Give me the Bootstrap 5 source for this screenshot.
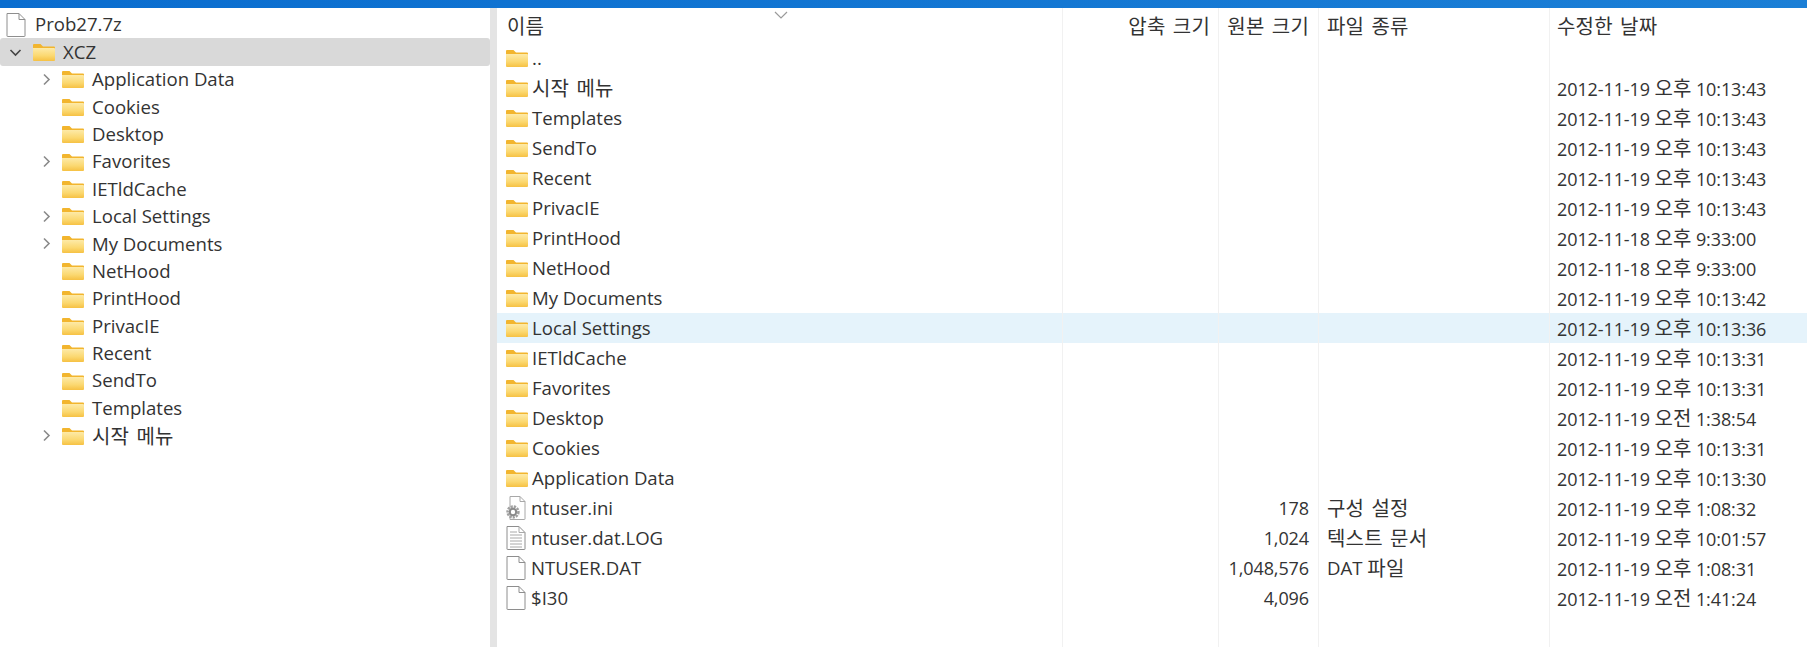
<!DOCTYPE html>
<html lang="ko">
<head>
<meta charset="utf-8">
<title>Prob27.7z</title>
<link href="https://cdn.jsdelivr.net/npm/bootstrap@5.3.0/dist/css/bootstrap.min.css" rel="stylesheet">
<style>
html,body{height:647px;overflow:hidden;background:#fff}
body{font-family:"Open Sans","Noto Sans CJK KR",sans-serif;font-size:18.6px;color:#333;line-height:1}
.ko{font-family:"Noto Sans CJK KR",sans-serif;font-size:20px;word-spacing:1.5px;letter-spacing:.2px}
.datecell{font-size:18px;letter-spacing:-.1px;white-space:pre}
.datecell .ko{letter-spacing:0;word-spacing:0}
.sysdefs{display:block;width:0;height:0}
.titlebar{height:8px;background:linear-gradient(90deg,#0a6dcf,#1b7fd6)}
.panes{height:639px}
.treepane{width:490px;padding-top:3px}
.splitter{width:7px;background:#e4e4e4}
.treerow{height:27.4px;white-space:nowrap}
.treerow.sel{background:#d9d9d9;border-radius:3px}
.lvl0{padding-left:6px}
.lvl1{padding-left:9px}
.lvl2{padding-left:40px}
.arrow{width:13px;height:13px;flex:none;fill:none;stroke:#8a8a8a;stroke-width:1.6}
.sel .arrow{stroke:#444;width:13px}
.blank{width:13px;flex:none}
.ico-folder{width:22px;height:18px;flex:none}
.lvl1 .ico-folder{margin-left:11px;margin-right:8px}
.lvl2 .ico-folder{margin-left:9px;margin-right:8px}
.lvl0 .ico-file{margin-right:9px}
.ico-file{width:20px;height:24px;flex:none}
.listpane{min-width:0}
.lrow{display:flex;height:30px;align-items:center}
.lrow.hl{background:#e5f3fb}
.lrow.head{height:35px;align-items:flex-start;position:relative}
.lrow.filler{flex-grow:1}
.c-name{width:565px;flex:none;padding-left:9px;display:flex;align-items:center;white-space:nowrap}
.head .c-name{height:35px;padding-left:10px}
.c-name .ico-folder{margin-right:4px}
.c-name .ico-file{margin-right:5px}
.c-packed,.c-size,.c-type,.c-date{height:100%;flex:none;border-left:1px solid #f1f1f1;display:flex;align-items:center;white-space:nowrap}
.c-packed{width:156px;justify-content:flex-end;padding-right:8px}
.c-size{width:100px;justify-content:flex-end;padding-right:9px}
.c-type{width:231px;padding-left:8px}
.c-date{padding-left:7px;width:258px}
.c-date.datecell{display:block;line-height:30px}
.sorter{position:absolute;left:277px;top:3px;width:14px;height:8px;fill:none;stroke:#9a9a9a;stroke-width:1.2}
</style>
</head>
<body>
<svg class="sysdefs" aria-hidden="true">
<defs>
<linearGradient id="fg" x1="0" y1="0" x2="0" y2="1"><stop offset="0" stop-color="#fdeaa8"/><stop offset=".6" stop-color="#fbd870"/><stop offset="1" stop-color="#f6c143"/></linearGradient>
<symbol id="folder" viewBox="0 0 22 18"><path d="M1 1h6.5l2.5 2.5h11a1 1 0 0 1 1 1V6H0V2a1 1 0 0 1 1-1z" fill="#f2b52e"/><path d="M0 5h21a1 1 0 0 1 1 1v11a1 1 0 0 1-1 1H1a1 1 0 0 1-1-1z" fill="url(#fg)"/></symbol>
<symbol id="page" viewBox="0 0 20 24"><path d="M1 .5h12l6 6V23a.5.5 0 0 1-.5.5h-17A.5.5 0 0 1 1 23z" fill="#fff" stroke="#8e8e8e"/><path d="M13 .5v6h6" fill="none" stroke="#8e8e8e"/></symbol>
<symbol id="txt" viewBox="0 0 20 24"><path d="M1 .5h12l6 6V23a.5.5 0 0 1-.5.5h-17A.5.5 0 0 1 1 23z" fill="#fff" stroke="#8e8e8e"/><path d="M13 .5v6h6M4 6h7M4 9h12M4 12h12M4 15h12M4 18h12M4 21h12" fill="none" stroke="#a8a8a8"/></symbol>
<symbol id="ini" viewBox="0 0 20 24"><path d="M4 .5h10l5 5V23a.5.5 0 0 1-.5.5H4z" fill="#fff" stroke="#a8a8a8"/><path d="M14 .5v5h5" fill="none" stroke="#a8a8a8"/><circle cx="7" cy="16" r="5.4" fill="none" stroke="#a0a0a0" stroke-width="2.6" stroke-dasharray="2.2 1"/><circle cx="7" cy="16" r="3.2" fill="none" stroke="#8a8a8a" stroke-width="2"/></symbol>
<symbol id="chev" viewBox="0 0 13 13"><path d="M4 1.5l5 5-5 5"/></symbol>
<symbol id="chevd" viewBox="0 0 13 13"><path d="M1.5 4l5 5 5-5"/></symbol>
</defs>
</svg>
<div class="titlebar"></div>
<div class="panes d-flex">
  <div class="treepane flex-none">
    <div class="treerow lvl0 d-flex align-items-center"><svg class="ico-file"><use href="#page"/></svg>Prob27.7z</div>
    <div class="treerow sel lvl1 d-flex align-items-center"><svg class="arrow"><use href="#chevd"/></svg><svg class="ico-folder"><use href="#folder"/></svg>XCZ</div>
    <div class="treerow lvl2 d-flex align-items-center"><svg class="arrow"><use href="#chev"/></svg><svg class="ico-folder"><use href="#folder"/></svg>Application Data</div>
    <div class="treerow lvl2 d-flex align-items-center"><span class="blank"></span><svg class="ico-folder"><use href="#folder"/></svg>Cookies</div>
    <div class="treerow lvl2 d-flex align-items-center"><span class="blank"></span><svg class="ico-folder"><use href="#folder"/></svg>Desktop</div>
    <div class="treerow lvl2 d-flex align-items-center"><svg class="arrow"><use href="#chev"/></svg><svg class="ico-folder"><use href="#folder"/></svg>Favorites</div>
    <div class="treerow lvl2 d-flex align-items-center"><span class="blank"></span><svg class="ico-folder"><use href="#folder"/></svg>IETldCache</div>
    <div class="treerow lvl2 d-flex align-items-center"><svg class="arrow"><use href="#chev"/></svg><svg class="ico-folder"><use href="#folder"/></svg>Local Settings</div>
    <div class="treerow lvl2 d-flex align-items-center"><svg class="arrow"><use href="#chev"/></svg><svg class="ico-folder"><use href="#folder"/></svg>My Documents</div>
    <div class="treerow lvl2 d-flex align-items-center"><span class="blank"></span><svg class="ico-folder"><use href="#folder"/></svg>NetHood</div>
    <div class="treerow lvl2 d-flex align-items-center"><span class="blank"></span><svg class="ico-folder"><use href="#folder"/></svg>PrintHood</div>
    <div class="treerow lvl2 d-flex align-items-center"><span class="blank"></span><svg class="ico-folder"><use href="#folder"/></svg>PrivacIE</div>
    <div class="treerow lvl2 d-flex align-items-center"><span class="blank"></span><svg class="ico-folder"><use href="#folder"/></svg>Recent</div>
    <div class="treerow lvl2 d-flex align-items-center"><span class="blank"></span><svg class="ico-folder"><use href="#folder"/></svg>SendTo</div>
    <div class="treerow lvl2 d-flex align-items-center"><span class="blank"></span><svg class="ico-folder"><use href="#folder"/></svg>Templates</div>
    <div class="treerow lvl2 d-flex align-items-center"><svg class="arrow"><use href="#chev"/></svg><svg class="ico-folder"><use href="#folder"/></svg><span class="ko">시작 메뉴</span></div>
  </div>
  <div class="splitter"></div>
  <div class="listpane flex-grow-1 d-flex flex-column">
    <div class="lrow head"><div class="c-name"><span class="ko">이름</span></div><svg class="sorter" viewBox="0 0 14 8"><path d="M1 1l6 6 6-6"/></svg><div class="c-packed"><span class="ko">압축 크기</span></div><div class="c-size"><span class="ko">원본 크기</span></div><div class="c-type"><span class="ko">파일 종류</span></div><div class="c-date"><span class="ko">수정한 날짜</span></div></div>
    <div class="lrow"><div class="c-name"><svg class="ico-folder"><use href="#folder"/></svg>..</div><div class="c-packed"></div><div class="c-size"></div><div class="c-type"></div><div class="c-date"></div></div>
    <div class="lrow"><div class="c-name"><svg class="ico-folder"><use href="#folder"/></svg><span class="ko">시작 메뉴</span></div><div class="c-packed"></div><div class="c-size"></div><div class="c-type"></div><div class="c-date datecell">2012-11-19 <span class="ko">오후</span> 10:13:43</div></div>
    <div class="lrow"><div class="c-name"><svg class="ico-folder"><use href="#folder"/></svg>Templates</div><div class="c-packed"></div><div class="c-size"></div><div class="c-type"></div><div class="c-date datecell">2012-11-19 <span class="ko">오후</span> 10:13:43</div></div>
    <div class="lrow"><div class="c-name"><svg class="ico-folder"><use href="#folder"/></svg>SendTo</div><div class="c-packed"></div><div class="c-size"></div><div class="c-type"></div><div class="c-date datecell">2012-11-19 <span class="ko">오후</span> 10:13:43</div></div>
    <div class="lrow"><div class="c-name"><svg class="ico-folder"><use href="#folder"/></svg>Recent</div><div class="c-packed"></div><div class="c-size"></div><div class="c-type"></div><div class="c-date datecell">2012-11-19 <span class="ko">오후</span> 10:13:43</div></div>
    <div class="lrow"><div class="c-name"><svg class="ico-folder"><use href="#folder"/></svg>PrivacIE</div><div class="c-packed"></div><div class="c-size"></div><div class="c-type"></div><div class="c-date datecell">2012-11-19 <span class="ko">오후</span> 10:13:43</div></div>
    <div class="lrow"><div class="c-name"><svg class="ico-folder"><use href="#folder"/></svg>PrintHood</div><div class="c-packed"></div><div class="c-size"></div><div class="c-type"></div><div class="c-date datecell">2012-11-18 <span class="ko">오후</span> 9:33:00</div></div>
    <div class="lrow"><div class="c-name"><svg class="ico-folder"><use href="#folder"/></svg>NetHood</div><div class="c-packed"></div><div class="c-size"></div><div class="c-type"></div><div class="c-date datecell">2012-11-18 <span class="ko">오후</span> 9:33:00</div></div>
    <div class="lrow"><div class="c-name"><svg class="ico-folder"><use href="#folder"/></svg>My Documents</div><div class="c-packed"></div><div class="c-size"></div><div class="c-type"></div><div class="c-date datecell">2012-11-19 <span class="ko">오후</span> 10:13:42</div></div>
    <div class="lrow hl"><div class="c-name"><svg class="ico-folder"><use href="#folder"/></svg>Local Settings</div><div class="c-packed"></div><div class="c-size"></div><div class="c-type"></div><div class="c-date datecell">2012-11-19 <span class="ko">오후</span> 10:13:36</div></div>
    <div class="lrow"><div class="c-name"><svg class="ico-folder"><use href="#folder"/></svg>IETldCache</div><div class="c-packed"></div><div class="c-size"></div><div class="c-type"></div><div class="c-date datecell">2012-11-19 <span class="ko">오후</span> 10:13:31</div></div>
    <div class="lrow"><div class="c-name"><svg class="ico-folder"><use href="#folder"/></svg>Favorites</div><div class="c-packed"></div><div class="c-size"></div><div class="c-type"></div><div class="c-date datecell">2012-11-19 <span class="ko">오후</span> 10:13:31</div></div>
    <div class="lrow"><div class="c-name"><svg class="ico-folder"><use href="#folder"/></svg>Desktop</div><div class="c-packed"></div><div class="c-size"></div><div class="c-type"></div><div class="c-date datecell">2012-11-19 <span class="ko">오전</span> 1:38:54</div></div>
    <div class="lrow"><div class="c-name"><svg class="ico-folder"><use href="#folder"/></svg>Cookies</div><div class="c-packed"></div><div class="c-size"></div><div class="c-type"></div><div class="c-date datecell">2012-11-19 <span class="ko">오후</span> 10:13:31</div></div>
    <div class="lrow"><div class="c-name"><svg class="ico-folder"><use href="#folder"/></svg>Application Data</div><div class="c-packed"></div><div class="c-size"></div><div class="c-type"></div><div class="c-date datecell">2012-11-19 <span class="ko">오후</span> 10:13:30</div></div>
    <div class="lrow"><div class="c-name"><svg class="ico-file"><use href="#ini"/></svg>ntuser.ini</div><div class="c-packed"></div><div class="c-size datecell">178</div><div class="c-type"><span class="ko">구성 설정</span></div><div class="c-date datecell">2012-11-19 <span class="ko">오후</span> 1:08:32</div></div>
    <div class="lrow"><div class="c-name"><svg class="ico-file"><use href="#txt"/></svg>ntuser.dat.LOG</div><div class="c-packed"></div><div class="c-size datecell">1,024</div><div class="c-type"><span class="ko">텍스트 문서</span></div><div class="c-date datecell">2012-11-19 <span class="ko">오후</span> 10:01:57</div></div>
    <div class="lrow"><div class="c-name"><svg class="ico-file"><use href="#page"/></svg>NTUSER.DAT</div><div class="c-packed"></div><div class="c-size datecell">1,048,576</div><div class="c-type">DAT&nbsp;<span class="ko">파일</span></div><div class="c-date datecell">2012-11-19 <span class="ko">오후</span> 1:08:31</div></div>
    <div class="lrow"><div class="c-name"><svg class="ico-file"><use href="#page"/></svg>$I30</div><div class="c-packed"></div><div class="c-size datecell">4,096</div><div class="c-type"></div><div class="c-date datecell">2012-11-19 <span class="ko">오전</span> 1:41:24</div></div>
    <div class="lrow filler"><div class="c-name"></div><div class="c-packed"></div><div class="c-size"></div><div class="c-type"></div><div class="c-date"></div></div>
  </div>
</div>
<script src="https://cdn.jsdelivr.net/npm/bootstrap@5.3.0/dist/js/bootstrap.bundle.min.js"></script>
</body>
</html>
